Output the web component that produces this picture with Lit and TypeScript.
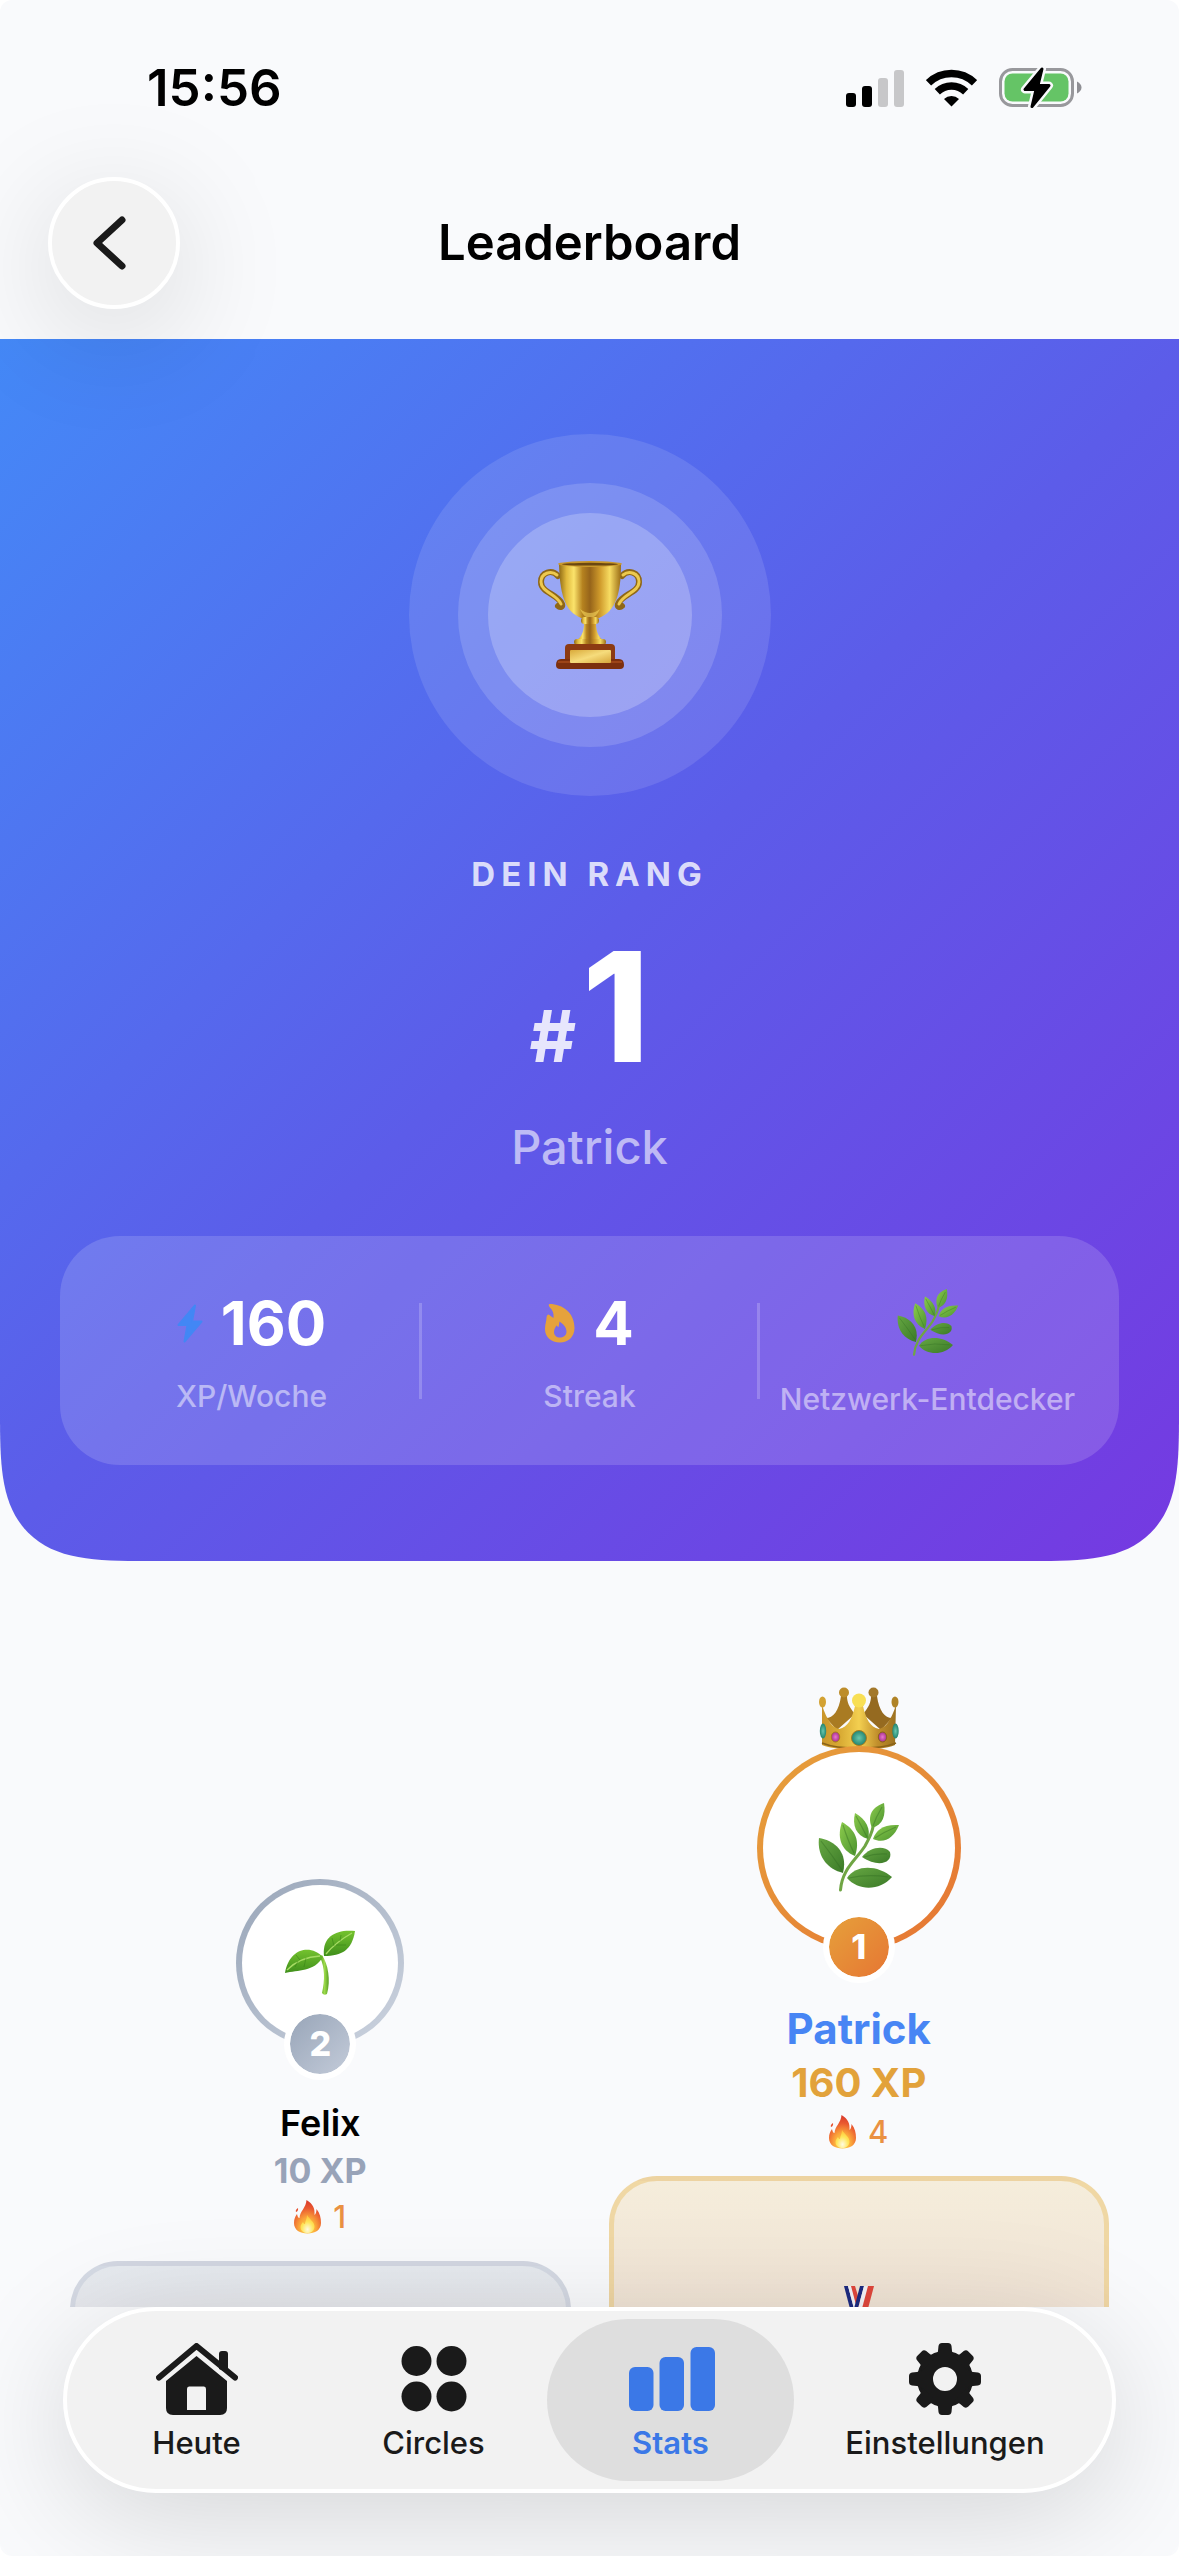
import { LitElement, html, svg, css, nothing, TemplateResult } from "lit";
import { customElement, property, state } from "lit/decorators.js";
import { classMap } from "lit/directives/class-map.js";

/* ---------- Illustrations ---------- */

const trophy = html`<svg class="trophy" viewBox="0 0 104 108" aria-hidden="true">
  <defs>
    <linearGradient id="cup" x1="0" x2="1">
      <stop offset="0" stop-color="#8f6a14" /><stop offset=".12" stop-color="#e0b93c" />
      <stop offset=".24" stop-color="#fbe36b" /><stop offset=".38" stop-color="#b5821f" />
      <stop offset=".5" stop-color="#96641a" /><stop offset=".66" stop-color="#cf9a2b" />
      <stop offset=".82" stop-color="#f7dc62" /><stop offset="1" stop-color="#9a6c16" />
    </linearGradient>
    <linearGradient id="plate" x1="0" y1="0" x2="1" y2="1">
      <stop offset="0" stop-color="#d9aa3a" /><stop offset=".5" stop-color="#f6dc7c" /><stop offset="1" stop-color="#d7a63a" />
    </linearGradient>
  </defs>
  <g fill="none" stroke-linecap="round">
    <path d="M20 15C14 8 3 11 3 21C3 32 20 33 24 43C25 46 22 47 20 45" stroke="#8f6716" stroke-width="6" />
    <path d="M19 14C13 9 3 12 3 21C3 31 19 33 23 43" stroke="#edc94e" stroke-width="3" />
    <path d="M84 15C90 8 101 11 101 21C101 32 84 33 80 43C79 46 82 47 84 45" stroke="#8f6716" stroke-width="6" />
    <path d="M85 14C91 9 101 12 101 21C101 31 85 33 81 43" stroke="#edc94e" stroke-width="3" />
  </g>
  <path d="M21 3H83C83 32 78 50 61 57H43C26 50 22 32 21 3Z" fill="url(#cup)" />
  <path d="M42 48Q52 56 62 48Q58 57 52 57Q46 57 42 48Z" fill="#f5d65e" opacity=".6" />
  <ellipse cx="52" cy="3" rx="32" ry="3" fill="#c9982c" />
  <ellipse cx="52" cy="3.2" rx="28" ry="1.4" fill="#6b4710" />
  <path d="M46 62H58C58 72 61 76 66 80H38C43 76 46 72 46 62Z" fill="url(#cup)" />
  <rect x="43" y="56" width="18" height="7" rx="3.5" fill="url(#cup)" />
  <rect x="36" y="78" width="32" height="6" rx="3" fill="url(#cup)" />
  <path d="M31 83H73Q77 83 77 87V100H27V87Q27 83 31 83Z" fill="#8c3a12" />
  <path d="M23 98H81Q86 98 86 104Q86 108 82 108H22Q18 108 18 104Q18 98 23 98Z" fill="#7c2f0e" />
  <path d="M20 101H84" stroke="#a84d1c" stroke-width="1.5" />
  <rect x="32" y="89" width="41" height="13" rx="1" fill="url(#plate)" />
</svg>`;

const herb = html`<svg class="herb" viewBox="0 0 82 90" aria-hidden="true">
  <defs>
    <linearGradient id="leafTop" x1="0" y1="0" x2="1" y2="1">
      <stop offset="0" stop-color="#8ccb4c" /><stop offset="1" stop-color="#4c9430" />
    </linearGradient>
    <linearGradient id="leafLow" x1="0" y1="0" x2="1" y2="1">
      <stop offset="0" stop-color="#66a742" /><stop offset="1" stop-color="#3b7a28" />
    </linearGradient>
  </defs>
  <path d="M22.5 87C24 66 38 57 47 43C52 34 54 30 55 24" fill="none" stroke="#6fa544" stroke-width="3" stroke-linecap="round" />
  <g fill="url(#leafLow)">
    <path d="M1 35C18 38 30 50 25 70C8 66-1 52 1 35Z" />
    <path d="M29 75C38 61 60 62 74 74C62 88 40 88 29 75Z" />
    <path d="M44 54C52 44 66 42 72 49C75 60 60 65 44 54Z" />
  </g>
  <g fill="url(#leafTop)">
    <path d="M24 19C38 27 42 38 37 53C22 47 19 33 24 19Z" />
    <path d="M37 10C48 16 53 26 50 36C38 33 34 22 37 10Z" />
    <path d="M66 0C51 5 50 16 54 25C65 22 68 12 66 0Z" />
    <path d="M81 22C65 21 58 27 55 36C66 41 76 35 81 22Z" />
  </g>
  <path d="M3 38Q14 52 24 67M31 75Q50 71 70 74M46 54Q58 50 69 51M25 22Q30 38 36 50M38 13Q44 24 49 34M64 4Q58 14 55 23M78 24Q66 29 57 35"
    fill="none" stroke="#2f6b20" stroke-opacity=".4" stroke-width="1.2" />
</svg>`;

const sprout = html`<svg class="sprout" viewBox="0 0 72 66" aria-hidden="true">
  <defs>
    <linearGradient id="sproutLeaf" x1="0" y1="0" x2="0" y2="1">
      <stop offset="0" stop-color="#74c22e" /><stop offset="1" stop-color="#3f8f1b" />
    </linearGradient>
    <linearGradient id="sproutStem" x1="0" x2="1">
      <stop offset="0" stop-color="#4f9e1c" /><stop offset=".5" stop-color="#9edb4c" /><stop offset="1" stop-color="#569f20" />
    </linearGradient>
  </defs>
  <path d="M38 25C44 34 47 50 43 64Q40 66 38 63C41 50 41 38 36 27Z" fill="url(#sproutStem)" />
  <path d="M40 26C38 8 50-1 71 1C68 20 58 26 40 26Z" fill="url(#sproutLeaf)" />
  <path d="M39 27C28 15 6 16 1 43C14 40 30 42 39 27Z" fill="url(#sproutLeaf)" />
  <path d="M42 24Q52 12 68 3M3 40Q16 27 36 26" fill="none" stroke="#a7dc63" stroke-width="1.4" />
  <path d="M50 16L48 8M56 11L57 5M52 15L62 15M14 31L11 37M22 28L20 37M16 30L12 25" fill="none" stroke="#2f7a12" stroke-opacity=".45" />
</svg>`;

const crown = html`<svg class="crown" viewBox="0 0 80 63" aria-hidden="true">
  <defs>
    <linearGradient id="crownGold" x1="0" x2="1">
      <stop offset="0" stop-color="#c9952b" /><stop offset=".25" stop-color="#d9ab34" />
      <stop offset=".5" stop-color="#f3cf50" /><stop offset=".75" stop-color="#c18f2c" /><stop offset="1" stop-color="#9c7020" />
    </linearGradient>
    <radialGradient id="teal"><stop offset="0" stop-color="#69c7ad" /><stop offset="1" stop-color="#22846f" /></radialGradient>
    <radialGradient id="pink"><stop offset="0" stop-color="#e877cf" /><stop offset="1" stop-color="#a8308f" /></radialGradient>
  </defs>
  <path d="M22 9C20 24 14 31 7 31L18 43L36 27C30 20 28 15 28 9Z" fill="#a97b22" />
  <path d="M52 9C52 15 50 20 44 27L62 43L73 31C66 31 60 24 58 9Z" fill="#956a20" />
  <circle cx="25" cy="5.5" r="5" fill="#bd8d2a" /><circle cx="54.5" cy="5.5" r="5" fill="#a3782a" />
  <path d="M3 18C8 34 14 41 20 42C29 40 33 32 36 19H44C47 32 51 40 60 42C66 41 72 34 77 18L76 58C60 64.5 20 64.5 3 58Z" fill="url(#crownGold)" />
  <path d="M3 56C20 63 60 63 77 56" fill="none" stroke="#8a6318" stroke-width="1.5" />
  <circle cx="40" cy="13.5" r="7" fill="#f8df55" />
  <ellipse cx="3.5" cy="15" rx="3.5" ry="5.5" fill="#d3a233" /><ellipse cx="76" cy="15" rx="3.5" ry="5.5" fill="#b08326" />
  <ellipse cx="40" cy="51" rx="7.5" ry="7.5" fill="url(#teal)" stroke="#a87b20" />
  <ellipse cx="16.5" cy="50" rx="4.2" ry="5" fill="url(#pink)" stroke="#a87b20" />
  <ellipse cx="63.5" cy="50" rx="4.2" ry="5" fill="url(#pink)" stroke="#8a6318" />
  <ellipse cx="4" cy="44" rx="3.2" ry="7.5" fill="url(#teal)" /><ellipse cx="76.5" cy="44" rx="3.2" ry="7.5" fill="url(#teal)" />
</svg>`;

const flame = html`<svg class="flame" viewBox="0 0 27 34" aria-hidden="true">
  <defs>
    <radialGradient id="blaze" cx=".5" cy=".85" r=".8">
      <stop offset="0" stop-color="#ffe14d" /><stop offset=".4" stop-color="#fba53a" /><stop offset=".75" stop-color="#ea5a30" /><stop offset="1" stop-color="#dc3f2c" />
    </radialGradient>
    <radialGradient id="core" cx=".5" cy=".8" r=".7">
      <stop offset="0" stop-color="#fffbe0" /><stop offset=".6" stop-color="#ffe65a" /><stop offset="1" stop-color="#ffc83e" />
    </radialGradient>
  </defs>
  <path d="M12.5 0C19 4 21 8 20.5 15C22 14 22.5 11 22.5 9C26 13 27 18 27 23C27 30 21 33.5 13.5 33.5C6 33.5 0 30 0 23C0 19 1 17 3 14C3.5 16 4 18 5.5 18C6 11 12 8 12.5 0Z" fill="url(#blaze)" />
  <path d="M2 12Q1 10 4 8Q4.5 11 2 12Z" fill="#e5502e" />
  <path d="M13 15C15 19 21 22 20.5 27C20 31 17 33 13.5 33C10 33 6.5 31 6.5 27C6.5 25 8 23 9 22C9.5 23.5 10 24 11 24C11 21 13 19 13 15Z" fill="url(#core)" />
</svg>`;

const medal = html`<svg class="medal" viewBox="0 0 60 90" aria-hidden="true">
  <path d="M21 0H26L32 20L29 30Z" fill="#e0473c" />
  <path d="M15 0H19L28 34H24Z" fill="#1c2a80" />
  <path d="M19 0H22L30 30L28 34Z" fill="#f4f4f8" />
  <path d="M31 0H35L26 34H22Z" fill="#1c2a80" />
  <path d="M35 0H39L30 34H26Z" fill="#f4f4f8" />
  <path d="M39 0H45L36 34H30Z" fill="#e0473c" />
  <circle cx="30" cy="60" r="28" fill="#e2b23c" /><circle cx="30" cy="60" r="21" fill="#f3cf5a" />
</svg>`;

/* ---------- Interface icons ---------- */

const signalIcon = html`<svg class="signal" viewBox="0 0 58 38" aria-hidden="true">
  <rect x="0" y="24" width="10" height="14" rx="3" /><rect x="16" y="17" width="10" height="21" rx="3" />
  <g fill="#c7c7c9"><rect x="32" y="9" width="10" height="29" rx="3" /><rect x="48" y="1" width="10" height="37" rx="3" /></g>
</svg>`;

const wifiIcon = html`<svg class="wifi" viewBox="0 0 51 38" aria-hidden="true">
  <g fill="none" stroke="#000" stroke-width="7.5">
    <path d="M2.5 13.8A33 33 0 0 1 48.5 13.8" /><path d="M11.3 22.7A20.5 20.5 0 0 1 39.7 22.7" />
  </g>
  <path d="M25.5 37.5L18 30A11 11 0 0 1 33 30Z" />
</svg>`;

const batteryIcon = html`<svg class="battery" viewBox="0 0 84 42" aria-hidden="true">
  <rect x="1.5" y="2.5" width="72" height="36" rx="12" fill="none" stroke="#98989c" stroke-width="3" />
  <rect x="5.5" y="6.500" width="64" height="28" rx="8" fill="#65c466" />
  <path d="M78 14.500Q82.5 17 82.5 20.500T78 26.500Z" fill="#8f8f94" />
  <path d="M43 2L26 22.5H37L33 39.5L50 18.5H39Z" fill="#f9fafc" stroke="#f9fafc" stroke-width="8" stroke-linejoin="round" />
  <path d="M43 2L26 22.5H37L33 39.5L50 18.5H39Z" stroke="#000" stroke-width="3" stroke-linejoin="round" />
</svg>`;

const chevronIcon = html`<svg class="chevron" viewBox="0 0 36 54" aria-hidden="true">
  <path d="M31 4L6 27L31 50" fill="none" stroke="#1a1a1a" stroke-width="7" stroke-linecap="round" stroke-linejoin="round" />
</svg>`;

const boltIcon = html`<svg class="bolt" viewBox="0 0 26 39" aria-hidden="true">
  <path d="M18 1.5L1.5 21H10.5L7.5 37.5L24.5 17.5H15Z" fill="#4287f5" stroke="#4287f5" stroke-width="2" stroke-linejoin="round" />
</svg>`;

const streakIcon = html`<svg class="streak" viewBox="0 0 30 39" aria-hidden="true">
  <path fill-rule="evenodd" fill="#e6a23c"
    d="M4.5 0C18 0 29.5 9 29.5 24C29.5 33 23 38.5 15 38.5C6 38.5 0 33 0 25C0 20 1.5 17 1.5 14C1.5 12 2.5 10.5 3.5 10.5C4.5 10.5 6.5 13 8.5 14C9 9 7.5 6 4.5 3C3.5 1.5 3.5 0 4.5 0ZM14.5 17.5C14 20 14 21 13.5 23C12.5 23 12 21.5 11.5 21.5C10.5 23 9 25 9 28C9 31.500 11.500 33.5 15 33.5C19 33.5 21.5 31 21.5 27.5C21.5 23 18 20 14.5 17.5Z" />
</svg>`;

const homeIcon = html`<svg class="tab-icon home" viewBox="0 0 82 72" aria-hidden="true">
  <path d="M63 26V11Q63 8 66 8H69Q72 8 72 11V30Z" />
  <path d="M3 34.5L40.5 3L79 34.5" fill="none" stroke="currentColor" stroke-width="6" stroke-linecap="round" stroke-linejoin="round" />
  <path fill-rule="evenodd" d="M40.5 13L71 38V65Q71 72 64 72H17Q10 72 10 65V38ZM33 43.5Q31 43.5 31 46V67H50V46Q50 43.5 48 43.5Z" />
</svg>`;

const circlesIcon = html`<svg class="tab-icon square" viewBox="0 0 72 72" aria-hidden="true">
  <circle cx="18.5" cy="18" r="15" /><circle cx="53.5" cy="18" r="15" />
  <circle cx="18.5" cy="53.5" r="15" /><circle cx="53.5" cy="53.5" r="15" />
</svg>`;

const statsIcon = html`<svg class="tab-icon stats" viewBox="-2 0 88 72" aria-hidden="true">
  <rect x="0" y="24" width="24.5" height="44" rx="6" /><rect x="30.500" y="14" width="24.5" height="54" rx="6" />
  <rect x="61.5" y="4" width="24.5" height="64" rx="6" />
</svg>`;

const gearIcon = html`<svg class="tab-icon square" viewBox="0 0 72 72" aria-hidden="true">
  <circle cx="36" cy="36" r="20" fill="none" stroke="currentColor" stroke-width="16" />
  ${[0, 45, 90, 135, 180, 225, 270, 315].map(
    (a) => svg`<path transform="rotate(${a} 36 36)" d="M25 14Q28.5 12 29 8L29.5 3Q30 0 33 0H39Q42 0 42.5 3L43 8Q43.5 12 47 14Z" />`
  )}
</svg>`;

/* ---------- Elements ---------- */

interface Player {
  name: string;
  xp: number;
  streak: number;
  rank: number;
  avatar: TemplateResult;
}

@customElement("podium-column")
export class PodiumColumn extends LitElement {
  @property({ attribute: false }) player!: Player;

  static styles = css`
    :host { display: block; flex: 1; min-width: 0; }
    .column { display: flex; flex-direction: column; align-items: center; }
    .avatar { position: relative; display: flex; justify-content: center; }
    .ring {
      position: relative; box-sizing: border-box; width: 168px; height: 168px; border-radius: 50%;
      border: 6px solid transparent; display: grid; place-items: center;
      background: linear-gradient(#fff, #fff) padding-box, linear-gradient(135deg, #98a5b8, #cdd4e0) border-box;
    }
    .first .ring {
      width: 204px; height: 204px;
      background: linear-gradient(#fff, #fff) padding-box, linear-gradient(135deg, #e6a23c, #e67433) border-box;
    }
    .badge {
      position: absolute; bottom: -33px; width: 60px; height: 60px; border-radius: 50%;
      border: 6px solid #fff; display: grid; place-items: center; color: #fff;
      font-size: 34px; font-weight: 800; line-height: 40px;
      background: linear-gradient(135deg, #98a5b8, #c3cbd9) padding-box, #fff border-box;
    }
    .first .badge { background: linear-gradient(135deg, #e6a03b, #e67633) padding-box, #fff border-box; }
    .crown { position: absolute; top: -59px; width: 80px; height: 63px; }
    .sprout { width: 72px; height: 66px; }
    .herb { width: 82px; height: 90px; }
    .name { margin: 54px 0 0; font-size: 36px; line-height: 44px; font-weight: 600; color: #000; }
    .first .name { font-size: 42px; line-height: 50px; font-weight: 700; color: #4785f4; }
    .xp { margin: 6px 0 0; font-size: 34px; line-height: 40px; font-weight: 700; color: #98a3b8; }
    .first .xp { font-size: 40px; line-height: 46px; color: #e2a23b; }
    .days { display: flex; align-items: center; gap: 12px; margin: 6px 0 0; font-size: 31px; line-height: 40px; font-weight: 500; color: #ea9142; }
    .flame { width: 27px; height: 34px; }
    .pedestal {
      align-self: stretch; box-sizing: border-box; height: 215px; margin-top: 24px; padding-top: 105px;
      display: flex; justify-content: center; border: 5px solid rgba(200, 206, 220, 0.6); border-radius: 48px 48px 0 0;
      background: linear-gradient(#e6eaef, #e4e5ea 50px, #e0e2e8);
    }
    .first .pedestal { height: 300px; border-color: rgba(238, 208, 146, 0.75); background: linear-gradient(#f5eddb, #f0e3d5 130px, #ecdccd); }
    .medal { width: 60px; height: 90px; }
  `;

  render() {
    const p = this.player;
    const first = p.rank === 1;
    return html`<article class=${classMap({ column: true, first })}>
      <div class="avatar">
        ${first ? crown : nothing}
        <div class="ring">${p.avatar}</div>
        <span class="badge">${p.rank}</span>
      </div>
      <h2 class="name">${p.name}</h2>
      <p class="xp">${p.xp} XP</p>
      <p class="days">${flame}<span>${p.streak}</span></p>
      <div class="pedestal">${first ? medal : nothing}</div>
    </article>`;
  }
}

@customElement("app-root")
export class AppRoot extends LitElement {
  @state() private active = "Stats";

  private players: Player[] = [
    { name: "Felix", xp: 10, streak: 1, rank: 2, avatar: sprout },
    { name: "Patrick", xp: 160, streak: 4, rank: 1, avatar: herb },
  ];

  private tabs = [
    { label: "Heute", icon: homeIcon },
    { label: "Circles", icon: circlesIcon },
    { label: "Stats", icon: statsIcon },
    { label: "Einstellungen", icon: gearIcon },
  ];

  static styles = css`
    :host { display: block; background: #fff; font-family: Inter, "Liberation Sans", sans-serif; }
    .app {
      display: flex; flex-direction: column; height: 100vh; overflow: hidden;
      background: #f9fafc; border-radius: 12px; color: #000;
    }
    .top { position: relative; z-index: 1; }
    .status {
      box-sizing: border-box; display: flex; align-items: center; justify-content: space-between;
      height: 177px; padding: 0 96px 2px 147px;
    }
    .clock { font-size: 51px; line-height: 60px; font-weight: 600; }
    .indicators { display: flex; align-items: center; gap: 22px; }
    .signal { width: 58px; height: 38px; }
    .wifi { width: 51px; height: 38px; }
    .battery { width: 84px; height: 42px; }
    .titlebar { display: grid; grid-template-columns: 1fr auto 1fr; align-items: center; padding: 0 48px 30px; }
    .back {
      box-sizing: border-box; width: 132px; height: 132px; padding: 0 10px 0 0; border: 4px solid #fff; border-radius: 50%;
      background: #f2f2f2; display: grid; place-items: center; box-shadow: 0 24px 120px rgba(0, 0, 0, 0.15);
    }
    .chevron { width: 36px; height: 54px; }
    .title { margin: 0; font-size: 49px; line-height: 60px; font-weight: 600; }
    .content { flex: 1; min-height: 0; overflow: hidden; }
    .hero {
      display: flex; flex-direction: column; align-items: center; padding: 95px 60px 96px; color: #fff;
      border-radius: 0 0 96px 96px; background: linear-gradient(135deg, #4489f7, #5c5ce9 50%, #7539e1);
    }
    @supports (corner-shape: squircle) {
      .hero { border-radius: 0 0 147px 147px; corner-shape: superellipse(1.7); }
    }
    .halo { display: grid; place-items: center; border-radius: 50%; }
    .outer { width: 362px; height: 362px; background: rgba(255, 255, 255, 0.11); }
    .middle { width: 264px; height: 264px; background: rgba(255, 255, 255, 0.15); }
    .inner { width: 204px; height: 204px; background: rgba(255, 255, 255, 0.22); }
    .trophy { width: 104px; height: 108px; }
    .eyebrow { margin: 58px 0 0; font-size: 33px; line-height: 40px; font-weight: 700; letter-spacing: 6px; color: rgba(255, 255, 255, 0.8); }
    .rank { display: flex; align-items: baseline; gap: 6px; margin: 38px 0 0; font-size: 152px; line-height: 150px; font-weight: 800; }
    .hash { font-size: 72px; line-height: 72px; font-weight: 700; color: rgba(255, 255, 255, 0.85); }
    .who { margin: 35px 0 0; font-size: 47px; line-height: 60px; font-weight: 500; color: rgba(255, 255, 255, 0.6); }
    .card {
      align-self: stretch; display: flex; align-items: center; margin: 59px 0 0; padding: 48px 24px;
      border-radius: 60px; background: rgba(255, 255, 255, 0.15);
    }
    .stat { flex: 1 1 0; min-width: 0; display: flex; flex-direction: column-reverse; align-items: center; gap: 19px; }
    .value { margin: 0; display: flex; align-items: center; gap: 18px; font-size: 60px; line-height: 72px; font-weight: 700; }
    .level { height: 78px; }
    .label { font-size: 30px; line-height: 36px; font-weight: 500; white-space: nowrap; color: rgba(255, 255, 255, 0.5); }
    .rule { width: 3px; height: 96px; background: rgba(255, 255, 255, 0.2); }
    .bolt { width: 26px; height: 39px; }
    .streak { width: 30px; height: 39px; }
    .level .herb { width: 62px; height: 68px; }
    .podium { display: flex; align-items: flex-end; gap: 38px; padding: 185px 70px 0; }
    .tabs {
      position: relative; display: grid; grid-template-columns: 237fr 237fr 237fr 312fr; margin: 0 63px 63px;
      padding: 8px 11px; border: 4px solid #fff; border-radius: 93px; background: #f2f2f2;
      box-shadow: 0 24px 120px rgba(0, 0, 0, 0.15);
    }
    .tab {
      display: flex; flex-direction: column; align-items: center; gap: 10px; padding: 24px 0 20px; border-radius: 81px;
      border: 0; background: none; color: #1a1a1a; font: 500 31px/36px Inter, "Liberation Sans", sans-serif;
    }
    .active { margin: 0 -5px; background: #dedede; color: #3b78e7; font-weight: 600; }
    .tab-icon { height: 72px; fill: currentColor; }
    .home { width: 82px; }
    .square { width: 72px; }
    .stats { width: 88px; }
  `;

  render() {
    return html`<div class="app">
      <header class="top">
        <div class="status">
          <time class="clock">15:56</time>
          <div class="indicators">${signalIcon}${wifiIcon}${batteryIcon}</div>
        </div>
        <div class="titlebar">
          <button class="back" aria-label="Zurück">${chevronIcon}</button>
          <h1 class="title">Leaderboard</h1>
        </div>
      </header>
      <main class="content">
        <section class="hero">
          <div class="halo outer"><div class="halo middle"><div class="halo inner">${trophy}</div></div></div>
          <p class="eyebrow">DEIN RANG</p>
          <p class="rank"><span class="hash">#</span>1</p>
          <p class="who">Patrick</p>
          <dl class="card">
            <div class="stat"><dt class="label">XP/Woche</dt><dd class="value">${boltIcon}160</dd></div>
            <div class="rule"></div>
            <div class="stat"><dt class="label">Streak</dt><dd class="value">${streakIcon}4</dd></div>
            <div class="rule"></div>
            <div class="stat"><dt class="label">Netzwerk-Entdecker</dt><dd class="value level">${herb}</dd></div>
          </dl>
        </section>
        <section class="podium">
          ${this.players.map((p) => html`<podium-column .player=${p}></podium-column>`)}
        </section>
      </main>
      <nav class="tabs">
        ${this.tabs.map(
          (t) => html`<button
            class=${classMap({ tab: true, active: t.label === this.active })}
            @click=${() => (this.active = t.label)}
          >${t.icon}<span>${t.label}</span></button>`
        )}
      </nav>
    </div>`;
  }
}
